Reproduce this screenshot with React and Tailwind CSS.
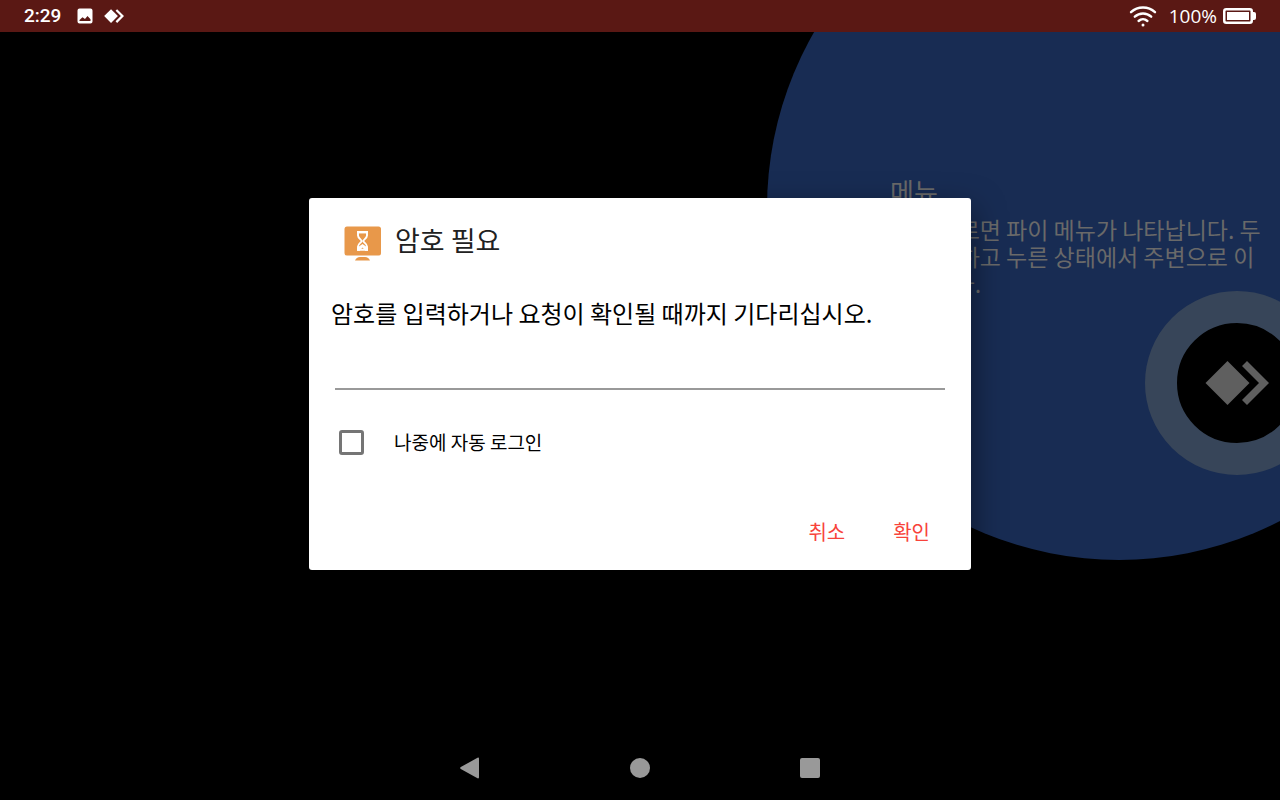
import { useState } from 'react'

function AnyDeskMark({ className }) {
  return (
    <svg viewBox="0 0 64 44" className={className} fill="currentColor" aria-hidden="true">
      <path d="M22.500 0 44.500 22 22.500 44 .5 22Z" />
      <path d="M42 0 64 22 42 44 37 39 54 22 37 5Z" />
    </svg>
  )
}

function PictureIcon() {
  return (
    <svg viewBox="0 0 16 16" className="size-4" aria-hidden="true">
      <path
        fill="currentColor"
        fillRule="evenodd"
        d="M2.500.5h11a2 2 0 0 1 2 2v11a2 2 0 0 1-2 2h-11a2 2 0 0 1-2-2v-11a2 2 0 0 1 2-2ZM2.500 13h11V11.200L10.500 8 8 11 5.500 9.300 2.500 12Z"
      />
    </svg>
  )
}

function WifiIcon() {
  return (
    <svg viewBox="0 0 28 22" className="h-[22px] w-7" fill="none" stroke="currentColor" strokeWidth="2.400" strokeLinecap="round" aria-hidden="true">
      <path d="M2 7.200a17.500 17.500 0 0 1 24 0" />
      <path d="M5.800 11.700a12 12 0 0 1 16.400 0" />
      <path d="M9.600 16a6.600 6.600 0 0 1 8.800 0" />
      <circle cx="14" cy="20" r="1.500" fill="currentColor" stroke="none" />
    </svg>
  )
}

function BatteryIcon() {
  return (
    <svg viewBox="0 0 33 16" className="h-4 w-[33px]" aria-hidden="true">
      <rect x="1.250" y="1.250" width="27.500" height="13.500" rx="2" fill="none" stroke="currentColor" strokeWidth="2.500" />
      <rect x="4" y="4" width="22" height="8" fill="currentColor" />
      <path d="M30 4h1a2 2 0 0 1 2 2v4a2 2 0 0 1-2 2h-1Z" fill="currentColor" />
    </svg>
  )
}

function WaitingIcon() {
  return (
    <svg viewBox="0 0 37 35" className="h-[35px] w-[37px]" aria-hidden="true">
      <rect x=".5" y=".5" width="36.500" height="29" rx="2.500" fill="#e8984a" />
      <path d="M11 34.500c1-2.300 2.500-3.500 5-3.500h5c2.500 0 4 1.200 5 3.500Z" fill="#e8984a" />
      <path
        d="M14 6.200h9v3.300c0 2.800-3.600 4-3.600 5.500s3.600 2.700 3.600 5.500v3.300h-9v-3.300c0-2.800 3.600-4 3.600-5.500S14 12.300 14 9.500Z"
        fill="none"
        stroke="#fff"
        strokeWidth="1.900"
      />
      <path d="M13.200 24.600v-2.800l5.300-3.800 5.300 3.800v2.800h-2.600l-2.700-3-2.700 3Z" fill="#fff" />
      <path d="M13 5h11v2.200H13ZM13 22.600h3v2.200h-3ZM21 22.600h3v2.200h-3Z" fill="#fff" />
    </svg>
  )
}

function StatusBar() {
  return (
    <header className="flex h-8 shrink-0 items-center justify-between bg-[#5a1814] px-6 font-['Roboto',sans-serif] text-white">
      <div className="flex items-center">
        <span className="text-[19px] font-medium">2:29</span>
        <div className="ml-4 flex items-center gap-[11px]">
          <PictureIcon />
          <AnyDeskMark className="h-[14px] w-5" />
        </div>
      </div>
      <div className="flex items-center">
        <WifiIcon />
        <span className="ml-3 font-['Open_Sans',sans-serif] text-[19px] leading-8 font-medium">100%</span>
        <span className="ml-1.5">
          <BatteryIcon />
        </span>
      </div>
    </header>
  )
}

function PieMenuHint() {
  return (
    <div className="absolute -top-44 -right-[191px] size-[704px] rounded-full bg-[#182c53] pt-80 pl-[123px] text-[#696969]">
      <h2 className="text-[26px] leading-[30px]">메뉴</h2>
      <p className="mt-2.5 w-[380px] text-[23px] leading-[27px]">
        길게 누르면 파이 메뉴가 나타납니다. 두 번 클릭하고 누른 상태에서 주변으로 이동합니다.
      </p>
    </div>
  )
}

function PieMenuButton() {
  return (
    <button
      type="button"
      aria-label="메뉴"
      className="absolute top-[259px] -right-[49px] flex size-[184px] items-center justify-center rounded-full border-[32px] border-[#374559] bg-black text-[#5f5f5f]"
    >
      <AnyDeskMark className="h-11 w-16" />
    </button>
  )
}

function PasswordDialog() {
  const [password, setPassword] = useState('')
  const [autoLogin, setAutoLogin] = useState(false)

  return (
    <form
      role="dialog"
      aria-labelledby="dialog-title"
      onSubmit={(e) => e.preventDefault()}
      className="relative w-full max-w-[662px] rounded-[3px] bg-white pt-7 pb-4 shadow-[0_12px_32px_rgba(0,0,0,0.5)]"
    >
      <div className="flex items-start gap-3.5 pl-[35px]">
        <WaitingIcon />
        <h1 id="dialog-title" className="text-[27px] leading-7 text-[#212121]">
          암호 필요
        </h1>
      </div>
      <label htmlFor="password" className="mt-8 block px-[22px] text-2xl leading-10 text-black">
        암호를 입력하거나 요청이 확인될 때까지 기다리십시오.
      </label>
      <div className="px-[26px]">
        <input
          id="password"
          type="password"
          value={password}
          onChange={(e) => setPassword(e.target.value)}
          className="mt-[9px] block h-12 w-full border-b-2 border-[#999] text-2xl outline-none"
        />
      </div>
      <label className="mt-9 flex items-center gap-[30px] pl-[30px] text-[19px] leading-8 text-black">
        <input
          type="checkbox"
          checked={autoLogin}
          onChange={(e) => setAutoLogin(e.target.checked)}
          className="size-[25px] appearance-none rounded-[3px] border-3 border-[#757575] checked:bg-[#f44336]"
        />
        나중에 자동 로그인
      </label>
      <div className="mt-[52px] flex justify-end gap-4 pr-[25px] text-[20px] leading-11 text-[#f8433b]">
        <button type="button" className="px-4">취소</button>
        <button type="submit" className="px-4">확인</button>
      </div>
    </form>
  )
}

function NavBar() {
  return (
    <nav className="flex h-16 shrink-0 items-center justify-center gap-[150px] text-[#999]">
      <button type="button" aria-label="뒤로">
        <svg viewBox="0 0 20 22" className="h-[22px] w-5" fill="currentColor">
          <path d="M.8 10.100 17.500.7q1.500-.6 1.500 1v18.600q0 1.600-1.500 1L.8 11.900q-1.300-.9 0-1.800Z" />
        </svg>
      </button>
      <button type="button" aria-label="홈" className="size-5 rounded-full bg-current" />
      <button type="button" aria-label="최근 앱" className="size-5 rounded-xs bg-current" />
    </nav>
  )
}

function App() {
  return (
    <div className="flex min-h-screen flex-col bg-black font-['Noto_Sans_CJK_KR',sans-serif]">
      <StatusBar />
      <main className="relative flex flex-1 items-center justify-center overflow-hidden">
        <PieMenuHint />
        <PieMenuButton />
        <PasswordDialog />
      </main>
      <NavBar />
    </div>
  )
}

export default App
